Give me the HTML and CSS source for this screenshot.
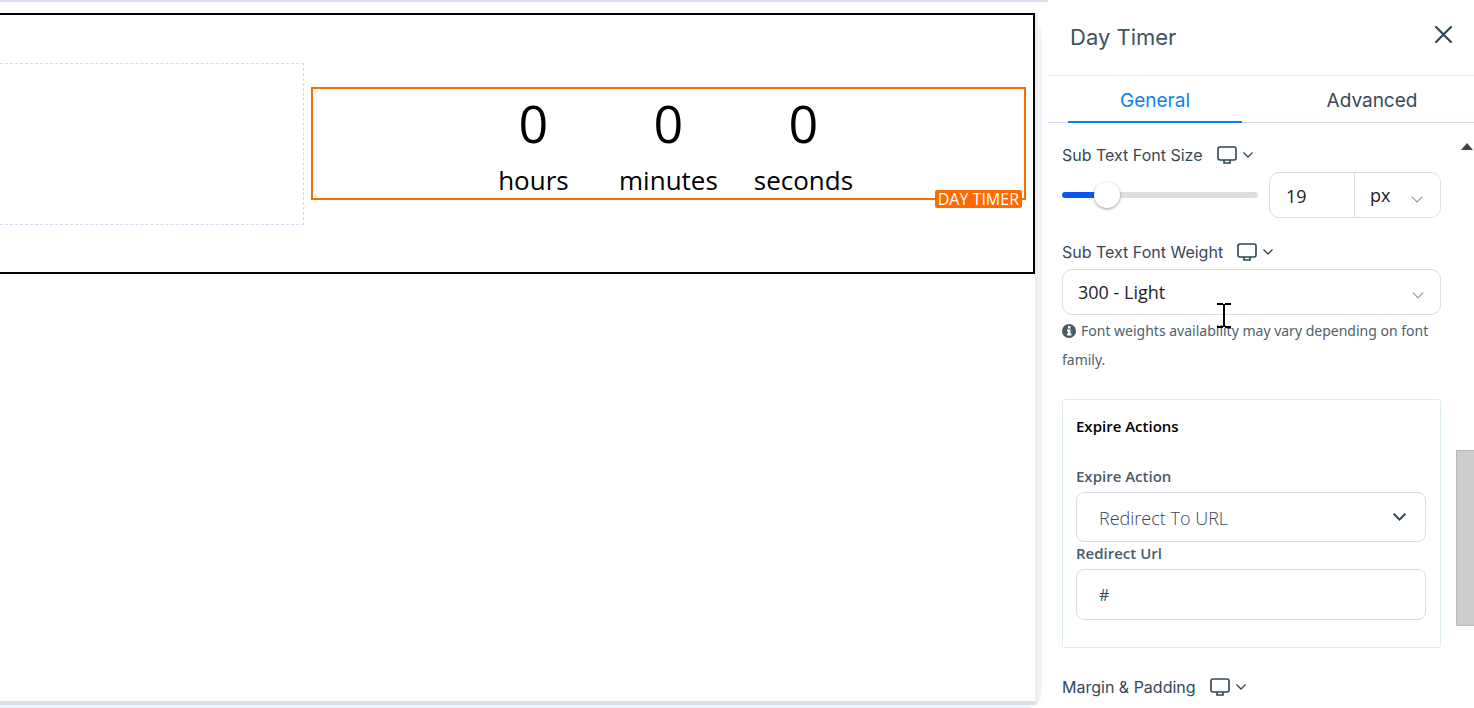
FILE: index.html
```html
<!DOCTYPE html>
<html lang="en">
<head>
<meta charset="utf-8">
<title>Day Timer</title>
<link rel="stylesheet" href="styles.css">
</head>
<body>
<svg class="sprite" aria-hidden="true">
  <symbol id="monitor" viewBox="0 0 20 18"><rect x="1" y="1" width="18" height="13" rx="2"/><path d="M7 14v3h6v-3"/></symbol>
  <symbol id="chevron" viewBox="0 0 10 6"><path d="M0.500 0.500L5 5l4.500-4.500"/></symbol>
</svg>
<main class="workspace">
  <div class="device">
    <div class="page">
      <section class="section">
        <div class="empty-column"></div>
        <div class="timer">
          <div class="unit"><span class="digit">0</span><span class="unit-name">hours</span></div>
          <div class="unit"><span class="digit">0</span><span class="unit-name">minutes</span></div>
          <div class="unit"><span class="digit">0</span><span class="unit-name">seconds</span></div>
          <span class="timer-tag">DAY TIMER</span>
        </div>
      </section>
    </div>
  </div>
</main>
<aside class="panel">
  <header class="panel-header">
    <h1 class="panel-title">Day Timer</h1>
    <button class="close" type="button" aria-label="Close"><svg class="close-icon" viewBox="0 0 16 16"><path d="M1 1l14 14M15 1L1 15"/></svg></button>
  </header>
  <nav class="tabs">
    <button class="tab tab-active" type="button">General</button>
    <button class="tab" type="button">Advanced</button>
  </nav>
  <div class="panel-body">
    <div class="settings">
      <div class="label-row">
        <label for="size">Sub Text Font Size</label>
        <button class="device-switch" type="button" aria-label="Device"><svg class="monitor"><use href="#monitor"/></svg><svg class="small-chevron"><use href="#chevron"/></svg></button>
      </div>
      <div class="size-row">
        <input class="slider" type="range" min="0" max="100" value="19" aria-label="Sub Text Font Size" style="--value: 19%">
        <div class="size-box">
          <input class="size-input" id="size" type="text" value="19">
          <div class="select-wrap unit-wrap">
            <select class="select unit-select" aria-label="Unit"><option>px</option></select>
            <svg class="thin-chevron"><use href="#chevron"/></svg>
          </div>
        </div>
      </div>
      <div class="label-row weight-label">
        <label for="weight">Sub Text Font Weight</label>
        <button class="device-switch" type="button" aria-label="Device"><svg class="monitor"><use href="#monitor"/></svg><svg class="small-chevron"><use href="#chevron"/></svg></button>
      </div>
      <div class="select-wrap weight-wrap">
        <select class="select weight-select" id="weight"><option>300 - Light</option></select>
        <svg class="thin-chevron"><use href="#chevron"/></svg>
        <svg class="text-cursor" viewBox="0 0 14 25"><path d="M0 1h6M8 1h6M7 1v23M0 24h6M8 24h6"/></svg>
      </div>
      <p class="note"><svg class="info" viewBox="0 0 14 14"><circle cx="7" cy="7" r="7"/><path d="M6 2h2.500v2.500H6zM5 5.500h3.500v4h1V11.500H5V9.500h1v-2H5z"/></svg>Font weights availability may vary depending on font family.</p>
      <section class="card">
        <h2 class="card-title">Expire Actions</h2>
        <label class="card-label" for="action">Expire Action</label>
        <div class="select-wrap">
          <select class="select field" id="action"><option>Redirect To URL</option></select>
          <svg class="bold-chevron"><use href="#chevron"/></svg>
        </div>
        <label class="card-label" for="url">Redirect Url</label>
        <input class="field url" id="url" type="text" value="#">
      </section>
      <div class="label-row margin-label">
        <span>Margin &amp; Padding</span>
        <button class="device-switch" type="button" aria-label="Device"><svg class="monitor"><use href="#monitor"/></svg><svg class="small-chevron"><use href="#chevron"/></svg></button>
      </div>
    </div>
    <div class="scrollbar" aria-hidden="true">
      <svg class="scroll-arrow" viewBox="0 0 12 7"><path d="M6 0l6 7H0z"/></svg>
      <div class="scroll-thumb"></div>
    </div>
  </div>
</aside>
</body>
</html>
```
FILE: styles.css
```css
* { box-sizing: border-box; }
body {
  margin: 0;
  height: 100vh;
  display: flex;
  overflow: hidden;
  background: #fff;
  color: #34495a;
  font-family: "Open Sans", "Noto Sans", sans-serif;
}
button, input, select { font: inherit; color: inherit; margin: 0; }
button { border: 0; padding: 0; background: none; }
svg { fill: none; stroke: #2b4552; }
.sprite { position: absolute; width: 0; height: 0; }

.workspace {
  flex: 1;
  min-width: 0;
  display: flex;
  border-top: 2px solid #dfd9f2;
  padding: 11px 6px 0 0;
}
.device {
  flex: 1;
  display: flex;
  padding: 0 4px 3px 0;
  background: #eff5ff;
  border-radius: 0 24px 16px 0;
}
.page {
  flex: 1;
  background: #fff;
  border-right: 3px solid #eee;
  border-bottom: 4px solid #dedede;
  border-radius: 0 0 4px 0;
}
.section {
  display: grid;
  grid-template-columns: 17fr 40fr;
  gap: 7px;
  align-items: start;
  padding: 48px 7px 47px 0;
  border: 2px solid #000;
  border-left: 0;
}
.empty-column {
  height: 162px;
  border: 1px dashed #d9d5ee;
  border-left: 0;
}
.timer {
  position: relative;
  display: flex;
  justify-content: center;
  margin-top: 24px;
  border: 2px solid #ff6a00;
  color: #000;
}
.unit {
  width: 135px;
  display: flex;
  flex-direction: column;
  align-items: center;
  gap: 5px;
}
.digit { font-size: 52px; line-height: 68px; }
.unit-name { font-size: 26px; line-height: 36px; }
.timer-tag {
  position: absolute;
  right: 2px;
  bottom: -10px;
  padding: 0 3px;
  border-radius: 2px;
  background: #ff6a00;
  color: #fff;
  font-size: 16px;
  line-height: 18px;
}

.panel {
  flex: 0 0 426px;
  min-width: 0;
  display: flex;
  flex-direction: column;
  font-family: Inter, sans-serif;
}
.panel-header {
  display: flex;
  justify-content: space-between;
  align-items: center;
  height: 76px;
  padding: 0 22px;
  border-bottom: 1px solid #e3edef;
}
.panel-title { margin: 0; padding-bottom: 2px; font-size: 22px; font-weight: 400; line-height: 28px; color: #3e545e; }
.close { height: 24px; line-height: 0; padding-bottom: 6px; }
.close-icon { width: 17px; height: 17px; stroke-width: 2; stroke-linecap: round; }
.tabs {
  display: flex;
  justify-content: space-between;
  height: 47px;
  padding: 0 15px 0 20px;
  border-bottom: 1px solid #dcd8f0;
}
.tab { width: 174px; height: 47px; padding-top: 4px; font-size: 19px; border-bottom: 2px solid transparent; }
.tab-active { color: #1180f2; border-color: #1180f2; }
.panel-body { flex: 1; min-height: 0; display: flex; }
.settings { flex: 1; min-width: 0; padding: 20px 15px 0 14px; }
.label-row { display: flex; align-items: center; gap: 14px; font-size: 16px; line-height: 24px; }
.device-switch { display: flex; align-items: center; gap: 6px; }
.monitor { width: 20px; height: 18px; stroke-width: 1.6; }
.small-chevron { width: 10px; height: 6px; stroke-width: 1.3; overflow: visible; }
.size-row { display: flex; gap: 11px; align-items: center; margin-top: 5px; }
.slider {
  appearance: none;
  flex: 1;
  min-width: 0;
  height: 26px;
  background: none;
}
.slider::-webkit-slider-runnable-track {
  height: 6px;
  border-radius: 3px;
  background: linear-gradient(to right, #0957f2 var(--value), #ddd var(--value));
}
.slider::-webkit-slider-thumb {
  appearance: none;
  width: 26px;
  height: 26px;
  margin-top: -10px;
  border-radius: 50%;
  background: #fff;
  box-shadow: 0 1px 3px rgba(0, 0, 0, .4);
}
.size-box {
  display: flex;
  flex: 0 0 172px;
  min-width: 0;
  height: 46px;
  border: 1px solid #dcdde6;
  border-radius: 10px;
  font-family: "Open Sans", "Noto Sans", sans-serif;
  font-size: 18px;
  color: #1c2228;
}
.size-input { flex: 1; width: 0; min-width: 0; border: 0; padding: 2px 16px 0; background: none; }
.select-wrap { position: relative; }
.select { appearance: none; display: block; width: 100%; background: #fff; }
.unit-wrap { flex: 0 0 86px; border-left: 1px solid #dcdde6; }
.unit-select { height: 44px; padding: 0 15px; border: 0; border-radius: 0 9px 9px 0; }
.thin-chevron { position: absolute; right: 17px; top: 23px; width: 12px; height: 7px; stroke: #999; pointer-events: none; overflow: visible; }
.weight-label { margin-top: 22px; }
.weight-wrap { margin-top: 5px; font-family: "Open Sans", "Noto Sans", sans-serif; font-size: 18px; color: #1c2228; }
.weight-select { height: 46px; padding: 0 15px; border: 1px solid #dcdde6; border-radius: 10px; }
.text-cursor { position: absolute; left: 155px; top: 34px; width: 14px; height: 25px; stroke: #000; stroke-width: 2; }
.note {
  margin: 1px 0 25px;
  font-family: "Noto Sans", sans-serif;
  font-size: 14px;
  line-height: 29px;
  color: #4d626c;
}
.info { width: 14px; height: 14px; margin-right: 5px; vertical-align: -2px; fill: #465b64; stroke: none; }
.info path { fill: #fff; }
.card {
  padding: 14px 14px 27px 13px;
  border: 1px solid #dceeef;
  border-radius: 3px;
  font-family: "Open Sans", "Noto Sans", sans-serif;
}
.card-title { margin: 0 0 27px; font-size: 15px; line-height: 24px; font-weight: 600; color: #000; }
.card-label { display: block; padding-bottom: 4px; font-size: 15px; line-height: 23px; font-weight: 600; color: #485b6b; }
.field {
  width: 100%;
  height: 50px;
  padding: 2px 22px 0;
  border: 1px solid #d9dbe0;
  border-radius: 8px;
  font-size: 18px;
  font-weight: 300;
  color: #34495a;
}
.url { display: block; height: 51px; padding-top: 0; font-size: 16px; font-weight: 400; }
.bold-chevron { position: absolute; right: 20px; top: 21px; width: 13px; height: 8px; stroke-width: 1.5; overflow: visible; pointer-events: none; }
.margin-label { margin-top: 27px; }
.scrollbar { flex: 0 0 18px; display: flex; flex-direction: column; align-items: center; padding-top: 20px; }
.scroll-arrow { width: 12px; height: 7px; margin-left: 4px; fill: #444; stroke: none; }
.scroll-thumb { width: 100%; height: 176px; margin-top: 300px; background: #cdcdcd; border: 1px solid #b8b8b8; border-right: 0; }
```
